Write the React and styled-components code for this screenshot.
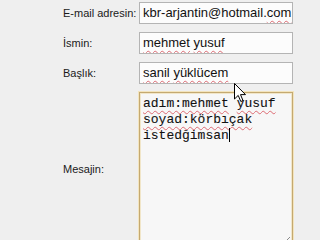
import React from "react";
import styled, { createGlobalStyle } from "styled-components";

const Global = createGlobalStyle`
  html, body { margin: 0; padding: 0; background: #efefef; overflow: hidden; }
  body { width: 320px; height: 240px; }
`;

const Page = styled.div`
  position: relative;
  width: 320px;
  height: 240px;
  background: #efefef;
  overflow: hidden;
`;

const Form = styled.div`
  display: grid;
  grid-template-columns: 76px 154px;
  row-gap: 8px;
  padding: 2px 0 0 63px;
`;

const Label = styled.div`
  font-family: "Liberation Sans", Arial, sans-serif;
  font-size: 11px;
  color: #1a1a1a;
  align-self: center;
  white-space: nowrap;
`;

const Field = styled.div`
  box-sizing: border-box;
  height: 22px;
  border: 1px solid #b4b4b4;
  background: #fcfcfc;
  padding: 0 3px;
  font-family: "Liberation Sans", Arial, sans-serif;
  font-size: 13px;
  line-height: 20px;
  color: #111;
  white-space: nowrap;
  overflow: hidden;
`;

const Area = styled.div`
  position: relative;
  box-sizing: border-box;
  height: 153px;
  border: 1px solid #c4a971;
  box-shadow: 0 0 0 1px #f3e4bd, inset 0 0 0 1px #f1e6c9;
  background: #f7f7f7;
  padding: 3px 3px;
  font-family: "Liberation Mono", "Courier New", monospace;
  font-size: 13px;
  line-height: 16px;
  color: #111;
  -webkit-text-stroke: 0.1px #111;
  white-space: pre;
`;

const Wrong = styled.span`
  text-decoration: underline wavy #dc6a72;
  text-decoration-thickness: 1px;
  text-underline-offset: 3px;
  text-decoration-skip-ink: none;
`;

const Caret = styled.span`
  display: inline-block;
  width: 1px;
  height: 14px;
  background: #000;
  vertical-align: -3px;
`;

const Grip = styled.svg`
  position: absolute;
  right: 1px;
  bottom: 1px;
`;

const Pointer = styled.svg`
  position: absolute;
  left: 234px;
  top: 83px;
`;

export default function App() {
  return (
    <Page>
      <Global />
      <Form>
        <Label>E-mail adresin:</Label>
        <Field>
          kbr-arjantin@hotmail.<Wrong>com</Wrong>
        </Field>
        <Label>İsmin:</Label>
        <Field>
          <Wrong>mehmet</Wrong> <Wrong>yusuf</Wrong>
        </Field>
        <Label>Başlık:</Label>
        <Field>
          <Wrong>sanil</Wrong> <Wrong>yüklücem</Wrong>
        </Field>
        <Label>Mesajin:</Label>
        <Area>
          <div>
            <Wrong>adım:mehmet</Wrong> <Wrong>yusuf</Wrong>
          </div>
          <div>
            <Wrong>soyad:körbıçak</Wrong>
          </div>
          <div>
            istedğimsan<Caret />
          </div>
          <Grip width="7" height="7" viewBox="0 0 7 7">
            <path d="M6 1 L1 6 M6 4 L4 6" stroke="#8a8a8a" strokeWidth="1" />
          </Grip>
        </Area>
      </Form>
      <Pointer width="13" height="20" viewBox="0 0 13 20">
        <path
          d="M0.5 0.5 L0.5 16 L4.2 12.4 L6.8 18.5 L9 17.6 L6.5 11.6 L11.5 11.6 Z"
          fill="#fff"
          stroke="#000"
          strokeWidth="1"
          strokeLinejoin="miter"
        />
      </Pointer>
    </Page>
  );
}
